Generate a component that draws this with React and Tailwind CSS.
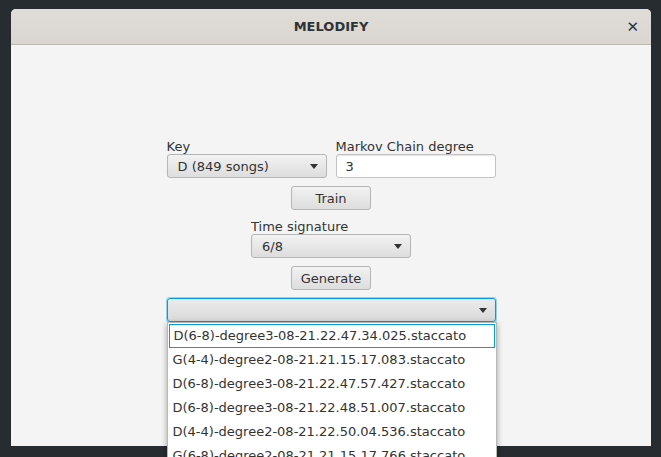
const font = { fontFamily: '"DejaVu Sans", "Liberation Sans", sans-serif' };

const recent = [
  "D(6-8)-degree3-08-21.22.47.34.025.staccato",
  "G(4-4)-degree2-08-21.21.15.17.083.staccato",
  "D(6-8)-degree3-08-21.22.47.57.427.staccato",
  "D(6-8)-degree3-08-21.22.48.51.007.staccato",
  "D(4-4)-degree2-08-21.22.50.04.536.staccato",
  "G(6-8)-degree2-08-21.21.15.17.766.staccato",
];

function Arrow() {
  return (
    <svg width="8" height="5" viewBox="0 0 8 5" className="shrink-0">
      <path d="M0 0 H8 L4 5 Z" fill="#333" />
    </svg>
  );
}

function ComboBox({ value, width, focused }) {
  return (
    <div
      className={`flex h-[24px] items-center justify-between rounded-[3px] border pl-[10px] pr-[8px] pt-[1px] text-[13px] text-[#333] ${
        focused
          ? "border-[#039ed3] shadow-[0_0_0_1px_#8fd3ee] bg-gradient-to-b from-[#ececec] to-[#d9d9d9]"
          : "border-[#b5b5b5] bg-gradient-to-b from-[#f2f2f2] to-[#dddddd]"
      } ${width}`}
    >
      <span>{value}</span>
      <Arrow />
    </div>
  );
}

function Button({ children }) {
  return (
    <div className="flex h-[24px] w-[80px] items-center justify-center rounded-[3px] border border-[#b5b5b5] bg-gradient-to-b from-[#f2f2f2] to-[#dddddd] pt-[1px] text-[13px] text-[#333]">
      {children}
    </div>
  );
}

export default function App() {
  return (
    <div
      className="h-[457px] w-[661px] overflow-hidden bg-[#272c30] pl-[11px] pt-[9px]"
      style={font}
    >
      <div className="flex h-[437px] w-[640px] flex-col rounded-t-[5px] bg-[#f4f4f4]">
        <div className="relative flex h-[36px] shrink-0 items-center justify-center rounded-t-[5px] border-b border-[#bdbab3] bg-gradient-to-b from-[#e0ddd9] to-[#d9d6d2] pt-[1px]">
          <span className="text-[13px] font-semibold text-[#2e3436]">MELODIFY</span>
          <span className="absolute right-[12px] top-[9px] text-[15px] font-bold leading-[18px] text-[#2e3436]">
            ✕
          </span>
        </div>

        <div className="flex flex-col items-center pt-[93px]">
          <div className="flex gap-[9px]">
            <div className="flex flex-col">
              <span className="h-[16px] pt-[1px] text-[13px] leading-[16px] text-[#333]">Key</span>
              <ComboBox value="D (849 songs)" width="w-[160px]" />
            </div>
            <div className="flex flex-col">
              <span className="h-[16px] pt-[1px] text-[13px] leading-[16px] text-[#333]">
                Markov Chain degree
              </span>
              <div className="flex h-[24px] w-[160px] items-center rounded-[3px] border border-[#c2c2c2] bg-white pl-[9px] pt-[1px] text-[13px] text-[#333] shadow-[inset_0_1px_1px_#e4e4e4]">
                3
              </div>
            </div>
          </div>

          <div className="mt-[8px]">
            <Button>Train</Button>
          </div>

          <div className="mt-[8px] flex flex-col">
            <span className="h-[16px] pt-[1px] text-[13px] leading-[16px] text-[#333]">
              Time signature
            </span>
            <ComboBox value="6/8" width="w-[160px]" />
          </div>

          <div className="mt-[8px]">
            <Button>Generate</Button>
          </div>

          <div className="relative mt-[8px]">
            <ComboBox value="" width="w-[329px]" focused />
            <div className="absolute left-0 top-[24px] w-[330px] border border-[#b8b8b8] bg-white p-[1px] shadow-[0_2px_6px_rgba(0,0,0,0.35)]">
              {recent.map((name, i) => (
                <div
                  key={`${name}-${i}`}
                  className={`flex h-[24px] items-center pl-[4px] text-[13px] text-[#333] ${
                    i === 0 ? "border border-[#039ed3] pl-[3px]" : ""
                  }`}
                >
                  {name}
                </div>
              ))}
            </div>
          </div>
        </div>
      </div>
    </div>
  );
}
